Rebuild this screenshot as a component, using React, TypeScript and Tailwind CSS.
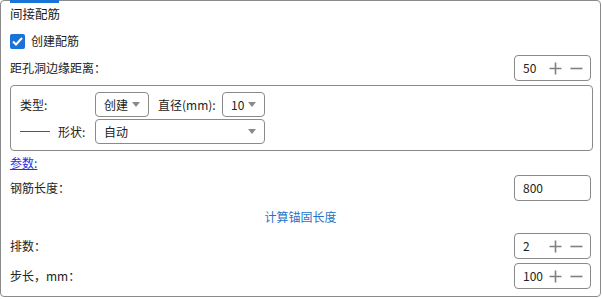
import React from 'react'

const font = { fontFamily: '"Noto Sans CJK SC", "Noto Sans", sans-serif' }

function Arrow() {
  return (
    <svg width="8" height="5" viewBox="0 0 8 5" className="shrink-0">
      <path d="M0 0 L8 0 L4 5 Z" fill="#8a8a8a" />
    </svg>
  )
}

function Select({ value, width }: { value: string; width: string }) {
  return (
    <div className={`${width} h-[25px] border border-[#8a8a8a] rounded-[4px] flex items-center justify-between pl-[8px] pr-[8px] text-[12px] text-[#222]`}>
      <span>{value}</span>
      <Arrow />
    </div>
  )
}

function Spinner({ value }: { value: string }) {
  return (
    <div className="w-[77px] h-[26px] border border-[#8a8a8a] rounded-[4px] flex items-center pl-[8px] pr-[7px] text-[12px] text-[#222]">
      <span className="flex-1">{value}</span>
      <svg width="13" height="13" viewBox="0 0 13 13" className="mr-[8px]">
        <path d="M6.5 0.5 V12.5 M0.5 6.5 H12.5" stroke="#808080" strokeWidth="1.6" />
      </svg>
      <svg width="13" height="13" viewBox="0 0 13 13">
        <path d="M0.5 6.5 H12.5" stroke="#808080" strokeWidth="1.6" />
      </svg>
    </div>
  )
}

function Input({ value }: { value: string }) {
  return (
    <div className="w-[77px] h-[26px] border border-[#8a8a8a] rounded-[4px] flex items-center pl-[8px] text-[12px] text-[#222]">
      {value}
    </div>
  )
}

export default function App() {
  return (
    <div className="w-[602px] h-[299px] bg-white" style={font}>
      <div className="relative w-[601px] h-[297px] border border-[#8a8a8a] rounded-[4px] px-[9px] text-[12px] text-[#222]">
        <div className="absolute left-[9px] -top-px w-[49px] h-[3px] bg-[#1a73d9]" />
        <div className="h-[26px] flex items-center text-[12.5px] text-[#1a1a1a]">间接配筋</div>

        <div className="h-[28px] flex items-center gap-[6px]">
          <div className="w-[15px] h-[15px] rounded-[2px] bg-[#1a73d9] flex items-center justify-center">
            <svg width="11" height="9" viewBox="0 0 11 9">
              <path d="M1 4.5 L4 7.5 L10 1" stroke="white" strokeWidth="2" fill="none" />
            </svg>
          </div>
          <span>创建配筋</span>
        </div>

        <div className="h-[26px] flex items-center justify-between">
          <span>距孔洞边缘距离：</span>
          <Spinner value="50" />
        </div>

        <div className="mt-[4px] w-[583px] border border-[#8a8a8a] rounded-[4px] pl-[9px] pt-[6px] pb-[6px] flex flex-col gap-[2px]">
          <div className="h-[25px] flex items-center">
            <span className="w-[75px]">类型:</span>
            <Select value="创建" width="w-[54px]" />
            <span className="ml-[9px] w-[64px]">直径(mm):</span>
            <Select value="10" width="w-[43px]" />
          </div>
          <div className="h-[25px] flex items-center">
            <div className="w-[30px] h-px bg-[#555]" />
            <span className="ml-[8px] w-[37px]">形状:</span>
            <Select value="自动" width="w-[170px]" />
          </div>
        </div>

        <div className="h-[24px] flex items-center">
          <a href="#" className="text-[#2b2be6] underline">参数:</a>
        </div>

        <div className="h-[26px] flex items-center justify-between">
          <span>钢筋长度：</span>
          <Input value="800" />
        </div>

        <div className="h-[32px] flex items-center justify-center text-[#1f74c9]">计算锚固长度</div>

        <div className="h-[26px] flex items-center justify-between">
          <span>排数：</span>
          <Spinner value="2" />
        </div>

        <div className="mt-[4px] h-[26px] flex items-center justify-between">
          <span>步长，mm：</span>
          <Spinner value="100" />
        </div>
      </div>
    </div>
  )
}
